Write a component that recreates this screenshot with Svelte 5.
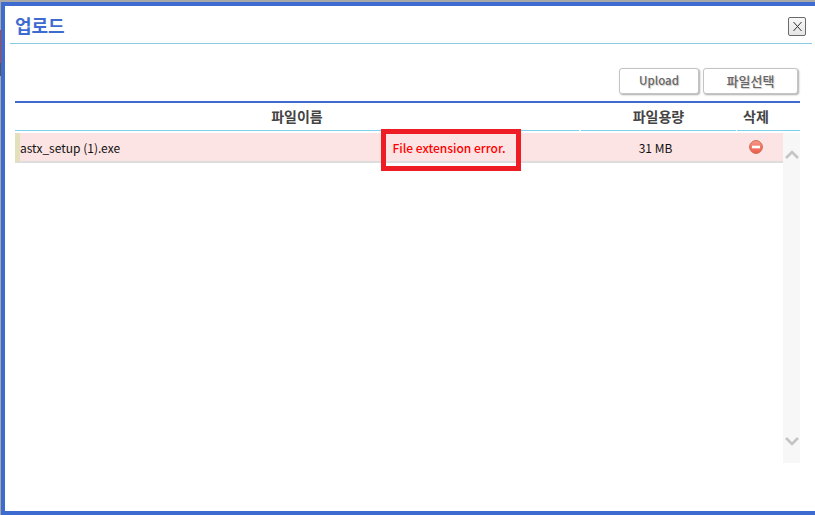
<script>
  let files = [{ name: 'astx_setup (1).exe', error: 'File extension error.', size: '31 MB' }]
</script>

<div class="modal">
  <div class="mhdr">
    <h3>업로드</h3>
    <button class="close" aria-label="닫기">
      <svg width="11" height="11" viewBox="0 0 11 11"><path d="M1.5 1l8 9M9.5 1l-8 9" stroke="#333" fill="none"/></svg>
    </button>
  </div>
  <div class="mbody">
    <div class="actions">
      <button class="btn upload">Upload</button>
      <button class="btn pick">파일선택</button>
    </div>
    <div class="table">
      <div class="thead">
        <div class="th c-name">파일이름</div>
        <div class="th c-size">파일용량</div>
        <div class="th c-del">삭제</div>
      </div>
      <div class="tbody">
        <div class="rows">
          {#each files as f}
            <div class="row">
              <div class="fname">{f.name}</div>
              <div class="err">{f.error}<span class="mark"></span></div>
              <div class="fsize">{f.size}</div>
              <div class="fdel">
                <svg width="14" height="14" viewBox="0 0 14 14">
                  <defs>
                    <linearGradient id="stop" x1="0" y1="0" x2="0" y2="1">
                      <stop offset="0" stop-color="#f7988a"/>
                      <stop offset="1" stop-color="#ee5a48"/>
                    </linearGradient>
                  </defs>
                  <circle cx="7" cy="7" r="6.4" fill="url(#stop)" stroke="#cf6a50"/>
                  <rect x="3" y="5.7" width="8" height="2.6" fill="#fff"/>
                </svg>
              </div>
            </div>
          {/each}
        </div>
        <div class="scroll">
          <svg width="14" height="9" viewBox="0 0 14 9"><path d="M1 8L7 2l6 6" stroke="#c4c4c4" stroke-width="2.6" fill="none"/></svg>
          <svg width="14" height="9" viewBox="0 0 14 9"><path d="M1 1l6 6 6-6" stroke="#c4c4c4" stroke-width="2.6" fill="none"/></svg>
        </div>
      </div>
    </div>
  </div>
</div>

<style>
  :global(body) { margin:0;background:linear-gradient(#a8a8a8 30px,#b04a3a 30px,#b04a3a 63px,#555 63px,#555 76px,#a8a8a8 76px); }
  .modal { box-sizing:border-box;width:814px;height:513px;margin:2px 0 0 1px;background:#fff;border:solid #3e6bd0;border-width:4px 0 4px 4px;font-family:"Noto Sans CJK KR","Noto Sans",sans-serif;overflow:hidden; }
  .mhdr { box-sizing:border-box;height:38px;margin-left:5px;width:802px;border-bottom:1px solid #8ccbe6;display:flex;align-items:center;justify-content:space-between; }
  h3 { margin:0 0 0 5px;font-size:18px;font-weight:700;color:#3e6bd0;line-height:24px; }
  .close { box-sizing:border-box;width:18px;height:19px;padding:0;margin:4px 6px 0 0;background:linear-gradient(#f8f8f8,#e6e6e6);border:1px solid #6a6a6a;border-radius:2px;display:flex;align-items:center;justify-content:center; }
  .mbody { padding:24px 0 0 10px;width:785px; }
  .actions { display:flex;justify-content:flex-end;gap:4px;height:33px;padding-right:2px; }
  .btn { box-sizing:border-box;height:26px;background:#fff;border:1px solid #c4c4c4;border-radius:3px;box-shadow:1px 1px 2px #aaa;color:#666;font-family:inherit;font-size:11.5px;font-weight:500;padding:0 0 2px;text-shadow:1px 1px 1px #ccc; }
  .upload { width:80px; }
  .pick { width:95px;font-size:13px; }
  .table { border-top:2px solid #3e6bd0; }
  .thead { display:flex;height:28px; }
  .th { box-sizing:border-box;height:28px;line-height:27px;border-bottom:1px solid #7dd0ee;text-align:center;font-size:14px;font-weight:700;color:#444; }
  .c-name { width:564px; }
  .c-size { width:155px;margin-left:2px; }
  .c-del { width:63px;margin-left:1px;padding-right:25px; }
  .tbody { display:flex;height:330px;margin-top:2px; }
  .rows { width:768px; }
  .row { box-sizing:border-box;display:flex;align-items:center;height:30px;background:#fde4e4;border-left:5px solid #e3e0bb;border-bottom:2px solid #ddd;font-size:12px;color:#111; }
  .fname { width:362px; }
  .err { position:relative;width:134px;text-align:center;color:#f00;font-weight:500; }
  .mark { position:absolute;left:-1px;top:-10px;width:130px;height:32px;border:5px solid #ee1c25; }
  .fsize { width:155px;text-align:center;margin-left:62px; }
  .fdel { width:38px;display:flex;justify-content:center;margin:0 0 0 4px; }
  .scroll { width:17px;background:#f7f7f7;display:flex;flex-direction:column;justify-content:space-between;align-items:center;padding:17px 0;box-sizing:border-box; }
</style>
